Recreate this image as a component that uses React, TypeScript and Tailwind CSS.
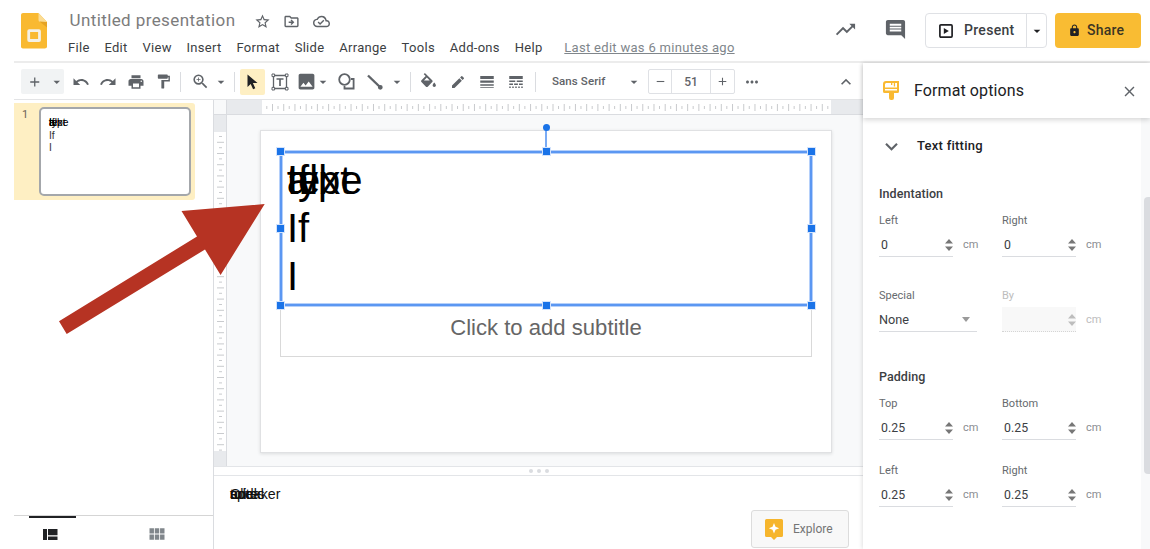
import type { ReactNode } from "react"
import {
  MdAdd, MdArrowDropDown, MdClose, MdComment, MdEdit, MdFormatPaint, MdImage,
  MdKeyboardArrowDown, MdKeyboardArrowUp, MdLineStyle, MdLineWeight, MdLock, MdMoreHoriz, MdOutlineCloudDone,
  MdOutlineDriveFileMove, MdPrint, MdRedo, MdRemove, MdStarBorder, MdTrendingUp, MdUndo, MdViewModule,
  MdZoomIn,
} from "react-icons/md"

const menus = ["File", "Edit", "View", "Insert", "Format", "Slide", "Arrange", "Tools", "Add-ons", "Help"]
const titleWords = ["If", "all", "text", "type", "a"]
const noteWords = ["Click", "to", "add", "speaker", "notes"]

const Cell = ({ className, children }: { className: string, children: ReactNode }) => (
  <div className={`flex h-[26px] shrink-0 items-center justify-center ${className}`}>{children}</div>
)

const Divider = ({ className }: { className: string }) => (
  <div className={`h-5 w-px shrink-0 bg-[#dadce0] ${className}`} />
)

const Logo = () => (
  <svg width="26" height="36" viewBox="0 0 26 36">
    <path d="M2 0h15.500l8.500 9v24a2.200 2.200 0 0 1-2.200 2.500H2A2 2 0 0 1 0 33V2.500A2.300 2.300 0 0 1 2 0z" fill="#f9b931" />
    <path d="M17.500 0l8.500 9h-6.500a2 2 0 0 1-2-2z" fill="#fbdc94" />
    <path d="M18.500 8.500l7.500 6V9z" fill="#e5a325" />
    <rect x="7.700" y="17.700" width="10.800" height="9.800" rx="0.500" fill="none" stroke="#f4f0e6" strokeWidth="2.800" />
  </svg>
)

const Header = () => (
  <header className="ml-[14px] flex h-[63px] shrink-0 border-b-2 border-[#ececec] pl-[7px]">
    <div className="pt-[13px]"><Logo /></div>
    <div className="ml-[21px] pt-[9px]">
      <div className="flex h-6 items-center text-[#5f6368]">
        <h1 className="w-[186px] whitespace-nowrap pl-[1.500px] text-[17px] tracking-[0.4px] text-[#7c7c7c]">Untitled presentation</h1>
        <MdStarBorder size={17} />
        <MdOutlineDriveFileMove size={17} className="ml-[12px]" />
        <MdOutlineCloudDone size={17} className="ml-[13px]" />
      </div>
      <nav className="mt-[6px] flex items-center gap-[14.800px] whitespace-nowrap text-[13px] leading-[18px] tracking-[0.3px] text-[#3c4043]">
        {menus.map((menu) => <span key={menu}>{menu}</span>)}
        <a className="ml-[7px] text-[#80868b] underline">Last edit was 6 minutes ago</a>
      </nav>
    </div>
    <div className="ml-auto flex items-start pr-[9px] pt-[12px]">
      <MdTrendingUp size={23} className="mt-[6px] text-[#5f6368]" />
      <MdComment size={23} className="ml-[27px] mt-[6px] text-[#5f6368]" />
      <div className="ml-[18px] mt-px flex h-[35px] w-[122px] rounded-[4px] border border-[#dfe1e5] text-[#202124]">
        <div className="flex flex-1 items-center border-r border-[#dfe1e5] pl-[13px]">
          <svg width="14" height="14" viewBox="0 0 14 14">
            <rect x="0.900" y="0.900" width="12.200" height="12.200" rx="1" fill="none" stroke="#202124" strokeWidth="1.700" />
            <path d="M4.800 3.900v6.200L9.800 7z" fill="#202124" />
          </svg>
          <span className="ml-[11px] text-[14px] font-medium tracking-[0.3px] text-[#3c4043]">Present</span>
        </div>
        <div className="flex w-[19px] items-center justify-center"><MdArrowDropDown size={16} className="shrink-0" /></div>
      </div>
      <button className="ml-2 mt-px flex h-[35px] w-[86px] items-center rounded-[4px] bg-[#f9bc33] pl-[13px] text-[#202124]">
        <MdLock size={13} />
        <span className="ml-[6px] text-[14px] font-medium tracking-[0.2px] text-[#3c3523]">Share</span>
      </button>
    </div>
  </header>
)

const Toolbar = () => (
  <div className="flex h-[37px] shrink-0 items-center border-b border-[#e3e4e6] pl-[7px] pt-px text-[#5f6368]">
    <div className="flex h-[25px] w-[43px] items-center rounded-[2px] bg-[#f1f3f4]">
      <MdAdd size={16} className="ml-[6px]" />
      <MdArrowDropDown size={16} className="ml-[6px]" />
    </div>
    <Cell className="ml-[3px] w-[27.500px]"><MdUndo size={18} /></Cell>
    <Cell className="w-[27.500px]"><MdRedo size={18} /></Cell>
    <Cell className="w-[27.500px]"><MdPrint size={18} /></Cell>
    <Cell className="w-[27.500px]"><MdFormatPaint size={17} /></Cell>
    <Divider className="ml-[3px]" />
    <Cell className="ml-[6px] w-[26px]"><MdZoomIn size={19} /></Cell>
    <Cell className="w-4"><MdArrowDropDown size={16} /></Cell>
    <Divider className="ml-[5px]" />
    <Cell className="ml-[5px] w-[25px] rounded-[2px] bg-[#feefc3]">
      <svg width="11" height="16" viewBox="0 0 11 16" fill="#202124">
        <path d="M0.500 0.500v12.400l3.200-3 2.400 5.300 2.200-1-2.400-5.200h4.600z" />
      </svg>
    </Cell>
    <Cell className="w-[30px]">
      <svg width="18" height="18" viewBox="0 0 18 18" fill="none" stroke="#5f6368" strokeWidth="1.300">
        <path d="M2.500 2.500h13v13h-13z" />
        <path d="M5.500 6h7M9 6v7" strokeWidth="1.700" />
        <path d="M1 1h2.600v2.600H1zM14.400 1H17v2.600h-2.600zM1 14.400h2.600V17H1zM14.400 14.400H17V17h-2.600z" fill="#fff" strokeWidth="1" />
      </svg>
    </Cell>
    <Cell className="w-[22px]"><MdImage size={21} /></Cell>
    <Cell className="w-[11px]"><MdArrowDropDown size={16} className="shrink-0" /></Cell>
    <Cell className="w-9">
      <svg width="17" height="17" viewBox="0 0 17 17" fill="none" stroke="#5f6368" strokeWidth="1.800">
        <circle cx="6.500" cy="6.500" r="5.300" />
        <path d="M13 6h2.600v9.500H6.500V13" />
      </svg>
    </Cell>
    <Cell className="w-[22px]">
      <svg width="16" height="16" viewBox="0 0 16 16" stroke="#5f6368" strokeWidth="2.400" fill="#5f6368">
        <path d="M1 1.500L14 14" />
        <circle cx="13.300" cy="13.300" r="1.200" />
      </svg>
    </Cell>
    <Cell className="w-[22px]"><MdArrowDropDown size={16} /></Cell>
    <Divider className="ml-[2px]" />
    <Cell className="w-[35px]">
      <svg width="15" height="14" viewBox="3 0 18 17" fill="#5f6368" className="-mt-1">
        <path d="M16.560 8.940L7.620 0 6.210 1.410l2.380 2.380-5.150 5.150c-.59.59-.59 1.540 0 2.120l5.500 5.500c.29.29.68.44 1.060.44s.77-.15 1.060-.44l5.500-5.500c.59-.58.59-1.530 0-2.120zM6.500 9L10 5.500 13.500 9zM19 11.500s-2 2.170-2 3.500c0 1.100.9 2 2 2s2-.9 2-2c0-1.330-2-3.500-2-3.500z" />
      </svg>
    </Cell>
    <Cell className="w-6"><MdEdit size={16} /></Cell>
    <Cell className="w-[34px]"><MdLineWeight size={18} /></Cell>
    <Cell className="w-6"><MdLineStyle size={18} /></Cell>
    <Divider className="ml-[7px]" />
    <span className="ml-4 w-[73px] text-[11.500px] font-medium tracking-[0.1px]">Sans Serif</span>
    <Cell className="w-[18px]"><MdArrowDropDown size={16} /></Cell>
    <div className="ml-[5px] flex h-[25px] w-[87px] items-stretch rounded-[2px] border border-[#dfe1e5] text-[12px] font-medium">
      <div className="flex w-[23px] items-center justify-center border-r border-[#dfe1e5]"><MdRemove size={13} /></div>
      <div className="flex flex-1 items-center justify-center border-r border-[#dfe1e5]">51</div>
      <div className="flex w-[23px] items-center justify-center"><MdAdd size={13} /></div>
    </div>
    <Cell className="w-[34px]"><MdMoreHoriz size={18} /></Cell>
    <Cell className="ml-auto w-[34px]"><MdKeyboardArrowUp size={20} /></Cell>
  </div>
)

const Filmstrip = () => (
  <aside className="flex w-[200px] shrink-0 flex-col border-r border-[#dadce0]">
    <div className="mt-[3px] flex h-[97px] w-[181px] rounded-r-[3px] bg-[#feefc3] pt-1">
      <span className="w-[25px] pl-2 pt-px text-[11px] leading-[14px] text-[#6b6355]">1</span>
      <div className="h-[89px] w-[152px] rounded-[5px] border-2 border-[#a4a7ab] bg-white pl-2 pt-[8px] font-['Liberation_Sans',sans-serif] text-[10.300px] leading-[12.500px] text-black">
        <div className="relative h-[12.500px]">
          {titleWords.map((word) => <span key={word} className="absolute left-0 top-0">{word}</span>)}
        </div>
        <div className="text-[#333]">If</div>
        <div className="text-[#333]">I</div>
      </div>
    </div>
    <div className="mt-auto flex h-[34px] border-t border-[#d5d5d5]">
      <div className="ml-[15px] flex w-[47px] border-t-2 border-[#202124] pl-[14px] pt-[11px]">
        <svg width="15" height="11" viewBox="0 0 15 11" fill="#202124">
          <path d="M0 0h4v11H0zM5 0h9.500v6.300H5zM5 7.500h9.500V11H5z" />
        </svg>
      </div>
      <MdViewModule size={20} className="ml-[71px] mt-2 text-[#80868b]" />
    </div>
  </aside>
)

const marks = (count: number) => Array.from({ length: count }, (_, i) => i)

const RulerTop = () => (
  <div className="flex h-[15px] shrink-0 border-b border-[#dadce0] bg-[#e8eaed] pl-[35px]">
    <svg width="569" height="14" className="bg-white">
      {marks(51).map((i) => (
        <g key={i} fill="#c9cbce">
          <rect x={4.3 + i * 11.22} y="6" width="1" height="3" />
          {i < 50 && <rect x={10 + i * 11.22} y="4" width="1" height="7" />}
        </g>
      ))}
    </svg>
  </div>
)

const RulerLeft = () => (
  <div className="flex w-[13px] shrink-0 flex-col border-r border-[#dadce0] bg-[#e8eaed]">
    <div className="h-[15px] shrink-0 border-b border-[#dadce0] bg-[#f8f9fa]" />
    <svg width="12" height="319" className="mt-[17px] bg-white">
      {marks(29).map((i) => (
        <g key={i} fill="#c9cbce">
          <rect x="5" y={4 + i * 11.2} width="3" height="1" />
          {i < 28 && <rect x="3" y={9.8 + i * 11.2} width="7" height="1" />}
        </g>
      ))}
    </svg>
  </div>
)

const handles = [
  "-left-[4px] -top-[4px]", "left-[262px] -top-[4px]", "-right-[4px] -top-[4px]",
  "-left-[4px] top-[73px]", "-right-[4px] top-[73px]",
  "-left-[4px] -bottom-[4px]", "left-[262px] -bottom-[4px]", "-right-[4px] -bottom-[4px]",
]

const Slide = () => (
  <div className="ml-[33px] mt-[15px] h-[323px] w-[572px] border border-[#e0e1e3] bg-white px-[19px] pt-[20px] font-['Liberation_Sans',sans-serif] shadow-[0_1px_3px_rgba(60,64,67,0.15)]">
    <div className="relative h-[155px] w-[532px] pl-[7px] pt-[5px] text-[40px] leading-[48px] text-black">
      <div className="relative h-[48px]">
        {titleWords.map((word) => <span key={word} className="absolute left-0 top-0">{word}</span>)}
      </div>
      <div>If</div>
      <div>I</div>
      <div className="absolute -inset-px border-4 border-[#b5d0fa]" />
      <div className="absolute inset-0 border-2 border-[#5b97f2]" />
      <div className="absolute left-[265px] -top-[22px] h-[22px] w-[2px] bg-[#7aabf5]" />
      <div className="absolute left-[263px] -top-[27px] size-[7px] rounded-full bg-[#1a73e8]" />
      {handles.map((place) => <div key={place} className={`absolute size-[9px] border border-[#d3e3fc] bg-[#1a73e8] ${place}`} />)}
    </div>
    <div className="h-[51px] w-[532px] border border-t-0 border-[#d9d9d9] pt-[9px] text-center text-[22.100px] leading-[26px] text-[#666]">Click to add subtitle</div>
  </div>
)

const Notes = () => (
  <div className="flex min-h-0 flex-1 flex-col">
    <div className="flex h-[10px] shrink-0 items-center justify-center gap-1 border-y border-[#e3e5e8]">
      {marks(3).map((i) => <i key={i} className="size-1 rounded-full bg-[#dadce0]" />)}
    </div>
    <div className="flex flex-1 justify-between">
      <div className="relative ml-[16px] mt-[10px] font-['Liberation_Sans',sans-serif] text-[14.200px] leading-[17px] text-[#111]">
        {noteWords.map((word) => <span key={word} className="absolute left-0 top-0">{word}</span>)}
      </div>
      <button className="mr-[14px] mt-[34px] flex h-[38px] w-[98px] items-center rounded-[3px] border border-[#dcdcdc] bg-[#f8f8f8] pl-[13px]">
        <svg width="18" height="21" viewBox="0 0 18 21">
          <path d="M1.500 0h15A1.500 1.500 0 0 1 18 1.500v15a1.500 1.500 0 0 1-1.500 1.500H12l-3 3-3-3H1.500A1.500 1.500 0 0 1 0 16.500v-15A1.500 1.500 0 0 1 1.500 0z" fill="#f6b52c" />
          <path d="M9 4l1.500 3.700L14.200 9.200l-3.700 1.500L9 14.400l-1.500-3.700L3.800 9.200l3.700-1.500z" fill="#fff" />
        </svg>
        <span className="ml-[10px] text-[12px] text-[#757575]">Explore</span>
      </button>
    </div>
  </div>
)

const Stepper = ({ label, value, disabled }: { label: string, value: string, disabled?: boolean }) => (
  <div className={`w-[123px] text-[11px] leading-4 ${disabled ? "text-[#bdbdbd]" : "text-[#666a6e]"}`}>
    <div>{label}</div>
    <div className="mt-[3px] flex items-center">
      <div className={`flex h-[25px] w-[74px] items-center border-b pt-[2px] ${disabled ? "border-dotted border-[#d5d5d5] bg-[#f8f8f8]" : "border-[#dadce0]"}`}>
        <span className="pl-[2px] text-[12.300px] tracking-[0.1px] text-[#3c4043]">{value}</span>
        <svg width="8" height="14" viewBox="0 0 8 14" className={`ml-auto ${disabled ? "text-[#bdbdbd]" : "text-[#777]"}`} fill="currentColor">
          <path d="M0 5.500L4 1l4 4.500zM0 8.500L4 13l4-4.500z" />
        </svg>
      </div>
      <span className={`ml-[10px] pt-px ${disabled ? "" : "text-[#8a8d91]"}`}>cm</span>
    </div>
  </div>
)

const FormatPanel = () => (
  <aside className="z-10 flex w-[287px] shrink-0 flex-col bg-white shadow-[-1px_0_4px_rgba(0,0,0,0.12)]">
    <div className="z-10 flex h-[55px] shrink-0 items-center pl-[20px] pr-[12px] shadow-[0_2px_5px_rgba(0,0,0,0.16)]">
      <svg width="17" height="19" viewBox="0 0 17 19" fill="#f9b931">
        <path d="M3 0H16v10.500a1.500 1.500 0 0 1-1.500 1.500H11v5a2 2 0 0 1-2 2H8a2 2 0 0 1-2-2v-5H1.500A1.500 1.500 0 0 1 0 10.500V3a3 3 0 0 1 3-3z" />
        <path d="M3 2h5v2h1.300V2h1.500v3.500h1.300V2H14v4.500H2V3zM2 8h12v1.500H2z" fill="#fff" />
      </svg>
      <h2 className="ml-[14px] text-[16px] tracking-[0.1px] text-[#202124]">Format options</h2>
      <MdClose size={17} className="ml-auto mt-px text-[#5f6368]" />
    </div>
    <div className="flex min-h-0 flex-1">
      <div className="flex-1 pl-4">
        <div className="mt-[17px] flex h-[22px] items-center">
          <MdKeyboardArrowDown size={25} className="text-[#5f6368]" />
          <h3 className="ml-[13px] text-[13px] font-medium tracking-[0.25px] text-[#202124]">Text fitting</h3>
        </div>
        <h4 className="mt-[29px] text-[12.500px] font-medium leading-4 tracking-[0.05px] text-[#3c4043]">Indentation</h4>
        <div className="mt-[11px] flex">
          <Stepper label="Left" value="0" />
          <Stepper label="Right" value="0" />
        </div>
        <div className="mt-[31px] flex">
          <div className="w-[123px] text-[11px] leading-4 text-[#666a6e]">
            <div>Special</div>
            <div className="mt-[3px] flex h-[25px] w-[98px] items-center justify-between border-b border-[#dadce0] pr-[7px] pt-px text-[12.700px] text-[#3c4043]">
              None
              <svg width="8" height="5" viewBox="0 0 8 5" fill="#9a9a9a"><path d="M0 0h8L4 5z" /></svg>
            </div>
          </div>
          <Stepper label="By" value="" disabled />
        </div>
        <h4 className="mt-[37px] text-[12.500px] font-medium leading-4 tracking-[0.05px] text-[#3c4043]">Padding</h4>
        <div className="mt-[11px] flex">
          <Stepper label="Top" value="0.25" />
          <Stepper label="Bottom" value="0.25" />
        </div>
        <div className="mt-[23px] flex">
          <Stepper label="Left" value="0.25" />
          <Stepper label="Right" value="0.25" />
        </div>
      </div>
      <div className="w-[9px] bg-[#f8f9fa] pl-[3px] pt-[79px]">
        <div className="h-[277px] rounded-l-[4px] bg-[#dadce0]" />
      </div>
    </div>
  </aside>
)

const App = () => (
  <div className="relative flex h-[549px] w-[1150px] flex-col overflow-hidden bg-white font-[Roboto,sans-serif]">
    <Header />
    <div className="flex min-h-0 flex-1">
      <div className="flex w-[863px] flex-col pl-[14px]">
        <Toolbar />
        <div className="flex min-h-0 flex-1">
          <Filmstrip />
          <main className="flex min-w-0 flex-1 flex-col">
            <div className="flex h-[366px] shrink-0 bg-[#f8f9fa]">
              <RulerLeft />
              <div className="min-w-0 flex-1">
                <RulerTop />
                <Slide />
              </div>
            </div>
            <Notes />
          </main>
        </div>
      </div>
      <FormatPanel />
    </div>
    <svg width="210" height="135" viewBox="0 0 210 135" className="absolute left-[57px] top-[202px]" fill="#b63323">
      <path d="M207.700 2L124.500 9l15.500 25.500L2 119.300l7.700 12.700L148 47.500l15.600 25.500z" />
    </svg>
  </div>
)

export default App
